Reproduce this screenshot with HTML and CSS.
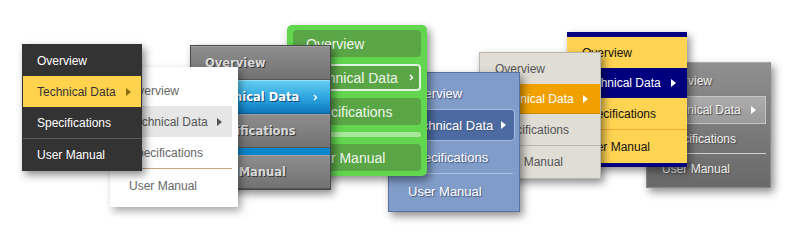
FILE: index.html
```
<!DOCTYPE html>
<html lang="en">
<head>
  <meta charset="UTF-8" />
  <title>Menu Styles</title>
  <link rel="stylesheet" href="styles.css">
</head>
<body>
  <div class="stage">

    <ul class="menu dark">
      <li class="item">Overview</li>
      <li class="item on">Technical Data<i class="tri"></i></li>
      <li class="item">Specifications</li>
      <li class="sep"></li>
      <li class="item">User Manual</li>
    </ul>

    <ul class="menu light">
      <li class="item">Overview</li>
      <li class="item on">Technical Data<i class="tri"></i></li>
      <li class="item">Specifications</li>
      <li class="sep"></li>
      <li class="item">User Manual</li>
    </ul>

    <ul class="menu glossy">
      <li class="item">Overview</li>
      <li class="item on">Technical Data<svg class="chev" width="5" height="7" viewBox="0 0 5 7"><path d="M1 1 L3.5 3.5 L1 6" fill="none" stroke="#fff" stroke-width="1.4"/></svg></li>
      <li class="item">Specifications</li>
      <li class="sep"></li>
      <li class="item">User Manual</li>
    </ul>

    <ul class="menu green">
      <li class="item">Overview</li>
      <li class="item on">Technical Data<svg class="chev" width="5" height="7" viewBox="0 0 5 7"><path d="M1 1 L3.5 3.5 L1 6" fill="none" stroke="#fff" stroke-width="1.4"/></svg></li>
      <li class="item">Specifications</li>
      <li class="sep"></li>
      <li class="item">User Manual</li>
    </ul>

    <ul class="menu blue">
      <li class="item">Overview</li>
      <li class="item on">Technical Data<i class="tri"></i></li>
      <li class="item">Specifications</li>
      <li class="sep"></li>
      <li class="item">User Manual</li>
    </ul>

    <ul class="menu sand">
      <li class="item">Overview</li>
      <li class="item on">Technical Data<i class="tri"></i></li>
      <li class="item">Specifications</li>
      <li class="sep"></li>
      <li class="item">User Manual</li>
    </ul>

    <ul class="menu navy">
      <li class="item">Overview</li>
      <li class="item on">Technical Data<i class="tri"></i></li>
      <li class="item">Specifications</li>
      <li class="sep"></li>
      <li class="item">User Manual</li>
    </ul>

    <ul class="menu slate">
      <li class="item">Overview</li>
      <li class="item on">Technical Data<i class="tri"></i></li>
      <li class="item">Specifications</li>
      <li class="sep"></li>
      <li class="item">User Manual</li>
    </ul>

  </div>
</body>
</html>
```

FILE: styles.css
```
html, body {
  margin: 0;
  padding: 0;
  background: #fff;
  font-family: "Liberation Sans", Arial, sans-serif;
  font-size: 12px;
}

.stage {
  position: relative;
  width: 800px;
  height: 250px;
  overflow: hidden;
}

/* every menu sits on the canvas at its own spot */
.menu {
  position: absolute;
  margin: 0;
  padding: 0;
  list-style: none;
  box-sizing: border-box;
  box-shadow: 3px 4px 8px rgba(0, 0, 0, 0.45);
}

.item {
  display: flex;
  align-items: center;
  box-sizing: border-box;
  white-space: nowrap;
}

.tri {
  width: 0;
  height: 0;
  border-left: 5px solid;
  border-top: 4px solid transparent;
  border-bottom: 4px solid transparent;
  margin-left: 10px;
}

.chev { margin-left: 14px; }

/* 1 - dark / yellow */
.dark {
  left: 22px; top: 44px;
  width: 120px; height: 127px;
  padding: 1px;
  background: #333;
  z-index: 8;
}
.dark .item { height: 31px; padding-left: 14px; color: #fff; }
.dark .on { background: #ffd34e; color: #333; }
.dark .tri { color: #8a6c12; }
.dark .sep { height: 1px; background: #5c5c5c; }

/* 2 - white */
.light {
  left: 110px; top: 67px;
  width: 128px; height: 140px;
  padding: 8px 6px 6px;
  background: #fff;
  color: #666;
  z-index: 7;
  box-shadow: 3px 4px 8px rgba(0, 0, 0, 0.35);
}
.light .item { height: 31px; padding-left: 13px; }
.light .on { background: #e6e6e6; color: #555; }
.light .tri { color: #555; margin-left: 9px; }
.light .sep { height: 1px; background: #c8a47f; margin-bottom: 1px; }

/* 3 - glossy gray / blue */
.glossy {
  left: 190px; top: 45px;
  width: 141px; height: 145px;
  border: 1px solid #4a4a4a;
  background: #777;
  font-family: "DejaVu Sans", Verdana, sans-serif;
  font-weight: bold;
  font-size: 11.5px;
  z-index: 6;
}
.glossy .item {
  height: 34px;
  padding-left: 14px;
  color: #d9d9d9;
  text-shadow: 1px 1px 0 #3c3c3c;
  background: linear-gradient(#8d8d8d, #727272);
  border-top: 1px solid #a0a0a0;
  border-bottom: 1px solid #555;
}
.glossy .on {
  color: #fff;
  background: linear-gradient(#62ccf3, #2aa2dd 55%, #0e78be);
  border-top-color: #96e0f9;
  border-bottom-color: #0b5d93;
  text-shadow: 1px 1px 0 #0a4c7c;
}
.glossy .sep { height: 7px; background: #0a86cd; }

/* 4 - green */
.green {
  left: 287px; top: 25px;
  width: 140px; height: 151px;
  padding: 5px 6px;
  display: flex;
  flex-direction: column;
  gap: 7px;
  border-radius: 5px;
  background: #62d64f;
  font-size: 14px;
  z-index: 5;
}
.green .item {
  height: 27px;
  flex: none;
  padding-left: 13px;
  border-radius: 4px;
  background: #5aa646;
  color: #eef6ea;
}
.green .on { border: 2px solid #e4f3de; padding-left: 11px; }
.green .chev { margin-left: 11px; }
.green .sep { height: 5px; flex: none; border-radius: 3px; background: #a7e79a; }

/* 5 - periwinkle */
.blue {
  left: 388px; top: 72px;
  width: 132px; height: 140px;
  padding: 4px;
  border: 1px solid #5b71a0;
  background: #809cc8;
  color: #fff;
  font-size: 13px;
  text-shadow: 1px 1px 1px #43577f;
  z-index: 4;
}
.blue .item { height: 32px; padding-left: 15px; }
.blue .on {
  background: #4c6ba2;
  border: 1px solid #a9bde0;
  border-radius: 4px;
  padding-left: 14px;
}
.blue .tri { color: #fff; margin-left: 8px; }
.blue .sep { height: 1px; background: #adc0e0; margin: 0 2px 1px; }

/* 6 - sand / orange */
.sand {
  left: 479px; top: 52px;
  width: 122px; height: 127px;
  border: 1px solid #b9b6ae;
  background: #e0ddd5;
  color: #555;
  z-index: 3;
}
.sand .item { height: 31px; padding-left: 15px; }
.sand .on {
  height: 30px;
  background: #f0a000;
  color: #fff;
  border-bottom: 1px solid #c98a00;
}
.sand .tri { color: #fff; margin-left: 9px; }
.sand .sep { height: 1px; background: #bcb8af; }

/* 7 - yellow / navy */
.navy {
  left: 567px; top: 32px;
  width: 120px; height: 135px;
  border-top: 5px solid #000080;
  border-bottom: 4px solid #000080;
  background: #ffd452;
  color: #111;
  z-index: 2;
}
.navy .item { height: 31px; padding-left: 15px; }
.navy .on { height: 30px; background: #00007f; color: #fff; }
.navy .tri { color: #fff; margin-left: 10px; }
.navy .sep { height: 1px; background: #eeaa2c; }
.navy .item:last-child { height: 33px; }

/* 8 - slate */
.slate {
  left: 646px; top: 62px;
  width: 125px; height: 126px;
  padding: 3px 4px 2px;
  border: 1px solid #8a8a8a;
  border-top-color: #a8a8a8;
  background: linear-gradient(#8f8f8f, #696969);
  color: #eee;
  text-shadow: 1px 1px 1px #4a4a4a;
  z-index: 1;
}
.slate .item { height: 29px; padding-left: 11px; }
.slate .item:first-child { height: 30px; }
.slate .on {
  height: 28px;
  background: linear-gradient(#acacac, #9a9a9a);
  border: 1px solid #c4c4c4;
  padding-left: 10px;
}
.slate .tri { color: #fff; margin-left: 10px; }
.slate .sep { height: 1px; background: #cfcfcf; }
.slate .item:last-child { height: 30px; }
```
